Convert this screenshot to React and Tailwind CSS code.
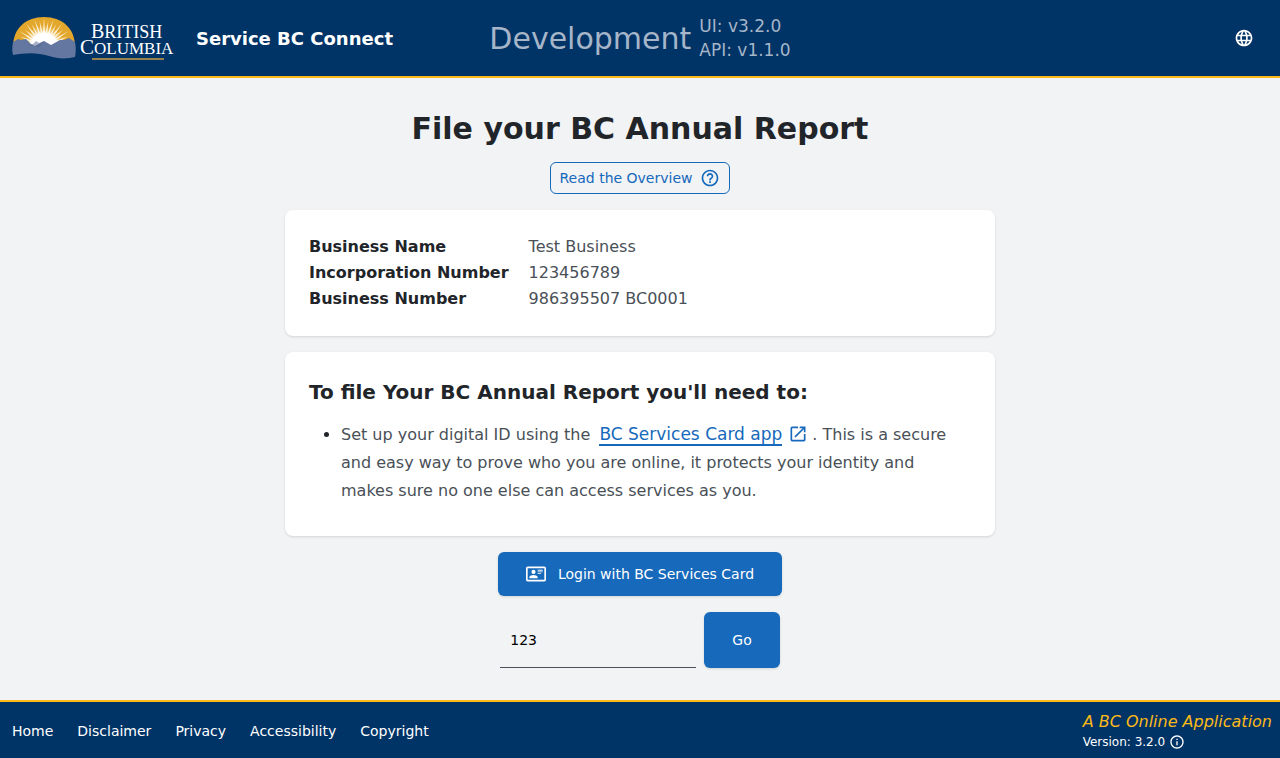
import { useState } from "react";
import { MdLanguage, MdHelpOutline, MdOpenInNew, MdInfoOutline } from "react-icons/md";

const businessDetails = [
  { label: "Business Name", value: "Test Business" },
  { label: "Incorporation Number", value: "123456789" },
  { label: "Business Number", value: "986395507 BC0001" },
];

const footerLinks = ["Home", "Disclaimer", "Privacy", "Accessibility", "Copyright"];

const rays = Array.from({ length: 19 }, (_, i) => {
  const angle = Math.PI * ((i + 0.5) / 19);
  const spread = 0.08;
  const outer = i % 2 ? 29 : 26;
  const point = (r, a) => `${(32 - r * Math.cos(a)).toFixed(2)} ${(32 - r * Math.sin(a)).toFixed(2)}`;
  return `M${point(14, angle - spread)}L${point(outer, angle)}L${point(14, angle + spread)}Z`;
}).join("");

function Logo() {
  return (
    <svg width="164" height="46" viewBox="0 0 164 46" role="img" aria-label="British Columbia">
      <defs>
        <radialGradient id="glow" cx="32" cy="31" r="30" gradientUnits="userSpaceOnUse">
          <stop offset="0.4" stopColor="#fff" />
          <stop offset="0.5" stopColor="#f0c468" />
          <stop offset="0.7" stopColor="#e3a82b" />
        </radialGradient>
      </defs>
      <path d="M1 32C1 13 14 2 32 2s31 11 31 30z" fill="url(#glow)" />
      <path d={rays} fill="#fff" opacity="0.8" />
      <path d="M17 33c1-10 8-15 15-15s14 5 15 15z" fill="#fff" />
      <path
        d="M1 27l5-3 3 1 5-1 5 5 4 2 9-5 7 4 9-5 4 0 5-2 6 4c1 5 1 10 0 15-8 2-17 2-26-1-13-4-24-3-36-1-1-4-1-8 0-13z"
        fill="#6477a1"
      />
      <path d="M16 30l5-1 3-3 3 2 5-2-2 3-3 3-5-1z" fill="#4f648f" opacity="0.5" />
      <g fill="#fff" fontFamily="'Liberation Serif', serif">
        <text x="79" y="23" fontSize="20">B<tspan fontSize="18">RITISH</tspan></text>
        <text x="68" y="39" fontSize="21">C<tspan fontSize="17">OLUMBIA</tspan></text>
      </g>
      <path d="M80 44h72" stroke="#96834b" strokeWidth="2" />
    </svg>
  );
}

function IdCardIcon() {
  return (
    <svg width="20" height="20" viewBox="0 0 24 24" fill="currentColor" aria-hidden="true">
      <path d="M22 3H2C.91 3.04.04 3.91 0 5v14c.04 1.09.91 1.96 2 2h20c1.09-.04 1.96-.91 2-2V5c-.04-1.09-.91-1.96-2-2zm0 16H2V5h20v14zm-8-2v-1.250c0-1.660-3.340-2.500-5-2.500s-5 .84-5 2.500V17h10zM9 7a2.500 2.500 0 1 0 0 5 2.500 2.500 0 0 0 0-5zm5 0v1h6V7h-6zm0 2v1h6V9h-6zm0 2v1h4v-1h-4z" />
    </svg>
  );
}

export default function App() {
  const [code, setCode] = useState("123");

  return (
    <div className="flex min-h-screen flex-col bg-[#f1f3f5] font-[Verdana,'DejaVu_Sans',sans-serif] text-[#212529]">
      <header className="grid min-h-[78px] grid-cols-[1fr_auto_1fr] items-center border-b-2 border-[#fcba19] bg-[#003366] px-3 text-white">
        <a href="#home" className="flex items-center gap-5">
          <Logo />
          <span className="pt-0.5 text-lg leading-6 font-bold">Service BC Connect</span>
        </a>
        <div className="flex items-center gap-2 text-[#a6b6c8]">
          <span className="pt-0.5 text-[30px] leading-10">Development</span>
          <div className="text-[17px] leading-6">
            <p>UI: v3.2.0</p>
            <p>API: v1.1.0</p>
          </div>
        </div>
        <button type="button" aria-label="Change language" className="mr-2.5 justify-self-end p-1">
          <MdLanguage size={20} />
        </button>
      </header>

      <main className="mx-auto flex w-full max-w-[710px] flex-1 flex-col items-center pt-7 pb-8">
        <h1 className="text-center text-[30px] leading-[46px] font-bold">File your BC Annual Report</h1>
        <button
          type="button"
          className="mt-2.5 flex h-8 items-center gap-2 rounded-md border border-[#1669bb] px-[9px] text-sm text-[#1669bb]"
        >
          Read the Overview
          <MdHelpOutline size={20} />
        </button>

        <section className="mt-4 w-full rounded-lg bg-white p-6 shadow-sm">
          <dl className="grid grid-cols-[auto_1fr] gap-x-5 leading-[26px]">
            {businessDetails.map(({ label, value }) => (
              <div key={label} className="contents">
                <dt className="font-bold">{label}</dt>
                <dd className="text-[#495057]">{value}</dd>
              </div>
            ))}
          </dl>
        </section>

        <section className="mt-4 w-full rounded-lg bg-white px-6 pt-6 pb-[31px] shadow-sm">
          <h2 className="text-xl leading-8 font-bold">To file Your BC Annual Report you'll need to:</h2>
          <ul className="mt-3 list-disc pr-4 pl-8 leading-7">
            <li>
              <span className="text-[#495057]">
                Set up your digital ID using the{" "}
                <a href="#services-card" className="ml-1 text-[17px] text-[#1669bb]">
                  <span className="border-b-2 border-[#1669bb]">BC Services Card app</span>
                  <MdOpenInNew size={20} className="mr-1 ml-1.5 inline align-text-bottom" />
                </a>
                . This is a secure and easy way to prove who you are online, it protects your identity and makes sure
                no one else can access services as you.
              </span>
            </li>
          </ul>
        </section>

        <button
          type="button"
          className="mt-4 flex h-11 items-center gap-3 rounded-md bg-[#1669bb] px-7 text-sm text-white shadow-sm"
        >
          <IdCardIcon />
          Login with BC Services Card
        </button>

        <form className="mt-4 flex gap-2" onSubmit={(event) => event.preventDefault()}>
          <input
            aria-label="Access code"
            value={code}
            onChange={(event) => setCode(event.target.value)}
            className="h-14 w-49 border-b border-[#495057] px-2.5 text-sm text-black outline-none"
          />
          <button type="submit" className="h-14 rounded-md bg-[#1669bb] px-7 text-sm text-white shadow-sm">
            Go
          </button>
        </form>
      </main>

      <footer className="flex min-h-[58px] items-center justify-between border-t-2 border-[#fcba19] bg-[#003366] pr-2 pl-3 text-white">
        <nav className="flex gap-6 pt-0.5 text-sm">
          {footerLinks.map((label) => (
            <a key={label} href={`#${label.toLowerCase()}`}>
              {label}
            </a>
          ))}
        </nav>
        <div className="pt-1">
          <p className="leading-5 text-[#fcba19] italic">A BC Online Application</p>
          <p className="flex items-center gap-1 text-xs leading-5">
            Version: 3.2.0
            <MdInfoOutline size={16} />
          </p>
        </div>
      </footer>
    </div>
  );
}
